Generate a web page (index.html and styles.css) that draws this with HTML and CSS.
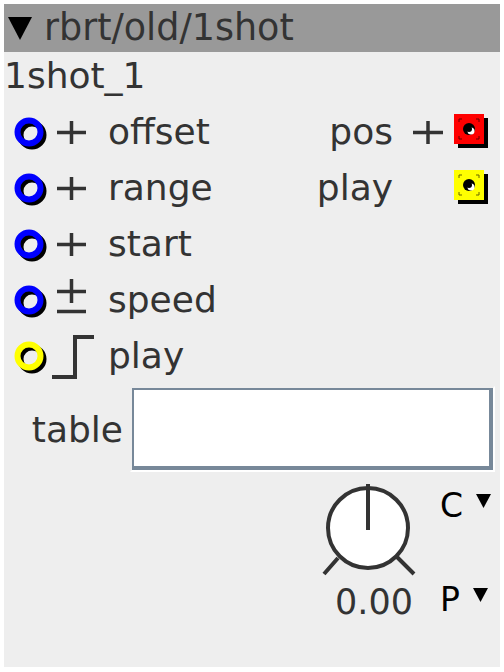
FILE: index.html
```html
<!DOCTYPE html>
<html lang="en">
<head>
  <meta charset="UTF-8">
  <title>rbrt/old/1shot</title>
  <link rel="stylesheet" href="styles.css">
</head>
<body>
  <div class="panel">
    <div class="titlebar">
      <svg class="tri" width="24" height="23" viewBox="0 0 24 23"><polygon points="0,0 24,0 12,23" fill="#000"/></svg>
      <span>rbrt/old/1shot</span>
    </div>
    <div class="name">1shot_1</div>

    <div class="ports">
      <div class="inlets">
        <div class="port">
          <svg class="jack" width="46" height="56"><circle cx="28" cy="31" r="11.5" fill="none" stroke="#000" stroke-width="6"/><circle cx="25" cy="28" r="11.5" fill="none" stroke="#00f" stroke-width="6"/></svg>
          <svg class="sym" width="50" height="56"><path d="M7 28.5H36M21.5 17V40" stroke="#333" stroke-width="3.5"/></svg>
          <span class="label">offset</span>
        </div>
        <div class="port">
          <svg class="jack" width="46" height="56"><circle cx="28" cy="31" r="11.5" fill="none" stroke="#000" stroke-width="6"/><circle cx="25" cy="28" r="11.5" fill="none" stroke="#00f" stroke-width="6"/></svg>
          <svg class="sym" width="50" height="56"><path d="M7 28.5H36M21.5 17V40" stroke="#333" stroke-width="3.5"/></svg>
          <span class="label">range</span>
        </div>
        <div class="port">
          <svg class="jack" width="46" height="56"><circle cx="28" cy="31" r="11.5" fill="none" stroke="#000" stroke-width="6"/><circle cx="25" cy="28" r="11.5" fill="none" stroke="#00f" stroke-width="6"/></svg>
          <svg class="sym" width="50" height="56"><path d="M7 28.5H36M21.5 17V40" stroke="#333" stroke-width="3.5"/></svg>
          <span class="label">start</span>
        </div>
        <div class="port">
          <svg class="jack" width="46" height="56"><circle cx="28" cy="31" r="11.5" fill="none" stroke="#000" stroke-width="6"/><circle cx="25" cy="28" r="11.5" fill="none" stroke="#00f" stroke-width="6"/></svg>
          <svg class="sym" width="50" height="56"><path d="M7 19.5H36M21.5 7V31M7 39.5H36" stroke="#333" stroke-width="3.5"/></svg>
          <span class="label">speed</span>
        </div>
        <div class="port">
          <svg class="jack" width="46" height="56"><circle cx="28" cy="31" r="11.5" fill="none" stroke="#000" stroke-width="6"/><circle cx="25" cy="28" r="11.5" fill="none" stroke="#ff0" stroke-width="6"/></svg>
          <svg class="sym" width="50" height="56"><path d="M2 49H25V9H44" fill="none" stroke="#333" stroke-width="4"/></svg>
          <span class="label">play</span>
        </div>
      </div>

      <div class="outlets">
        <div class="port">
          <span class="label">pos</span>
          <svg class="sym" width="46" height="56"><path d="M9 28.5H39M24 17V40" stroke="#333" stroke-width="3.5"/></svg>
          <svg class="socket" width="36" height="36">
            <rect x="4" y="4" width="30" height="30" fill="#000"/>
            <rect x="0" y="0" width="30" height="30" fill="#f00"/>
            <path d="M5 8V5H8M22 5H25V8M25 22V25H22M8 25H5V22" fill="none" stroke="#600" stroke-width="1"/>
            <circle cx="15" cy="15" r="6" fill="#000"/>
            <circle cx="17" cy="17" r="3.5" fill="#fff"/>
            <circle cx="15" cy="15" r="3" fill="#000"/>
          </svg>
        </div>
        <div class="port">
          <span class="label">play</span>
          <svg class="sym" width="46" height="56"></svg>
          <svg class="socket" width="36" height="36">
            <rect x="4" y="4" width="30" height="30" fill="#000"/>
            <rect x="0" y="0" width="30" height="30" fill="#ff0"/>
            <path d="M5 8V5H8M22 5H25V8M25 22V25H22M8 25H5V22" fill="none" stroke="#660" stroke-width="1"/>
            <circle cx="15" cy="15" r="6" fill="#000"/>
            <circle cx="17" cy="17" r="3.5" fill="#fff"/>
            <circle cx="15" cy="15" r="3" fill="#000"/>
          </svg>
        </div>
      </div>
    </div>

    <div class="table-row">
      <span class="table-label">table</span>
      <div class="entry-frame"><div class="entry"></div></div>
    </div>

    <div class="controls">
      <div class="knob">
        <svg width="100" height="96">
          <circle cx="50" cy="48" r="40" fill="#fff" stroke="#333" stroke-width="4"/>
          <path d="M50 4V50M6 94L20 78M79 77L96 94" stroke="#333" stroke-width="4"/>
        </svg>
        <div class="knob-value">0.00</div>
      </div>
      <div class="selects">
        <div class="select">
          <span>C</span>
          <svg class="arrow" width="15" height="14"><polygon points="0,0 15,0 7.5,14" fill="#000"/></svg>
        </div>
        <div class="select second">
          <span>P</span>
          <svg class="arrow" width="15" height="14"><polygon points="0,0 15,0 7.5,14" fill="#000"/></svg>
        </div>
      </div>
    </div>
  </div>
</body>
</html>
```

FILE: styles.css
```css
body { margin: 4px; background: #fff; font-family: "DejaVu Sans", sans-serif; color: #333; }
.panel { width: 496px; height: 663px; background: #eee; font-size: 36px; }
.titlebar { height: 48px; background: #999; display: flex; align-items: center; line-height: 48px; font-size: 36.5px; }
.titlebar .tri { margin-left: 4px; margin-right: 12px; }
.name { height: 52px; line-height: 48px; }

.ports { display: flex; justify-content: space-between; }
.port { height: 56px; display: flex; align-items: center; line-height: 56px; }
.inlets .label { margin-left: 8px; }
.outlets { padding-right: 10px; }
.outlets .port { justify-content: flex-end; }
.outlets .label { margin-right: 11px; }
.outlets .socket { margin-left: 4px; }

.table-row { display: flex; align-items: center; margin-top: 2px; height: 86px; }
.table-label { width: 119px; text-align: right; }
.entry-frame { margin-left: 7px; border: 2px solid; border-color: transparent #fff #fff transparent; }
.entry { width: 355px; height: 76px; background: #fff; border-style: solid; border-color: #778899; border-width: 2px 4px 4px 2px; }

.controls { display: flex; justify-content: flex-end; padding-right: 4px; }
.knob { width: 100px; margin-top: 8px; }
.knob-value { line-height: 48px; margin-top: -6px; text-align: center; padding-left: 12px; font-size: 35px; }
.selects { width: 56px; margin-left: 22px; padding-top: 10px; color: #000; font-size: 33px; }
.select { display: flex; align-items: flex-start; height: 48px; line-height: 48px; }
.select.second { margin-top: 46px; }
.select .arrow { margin-left: 13px; margin-top: 12px; }
```
